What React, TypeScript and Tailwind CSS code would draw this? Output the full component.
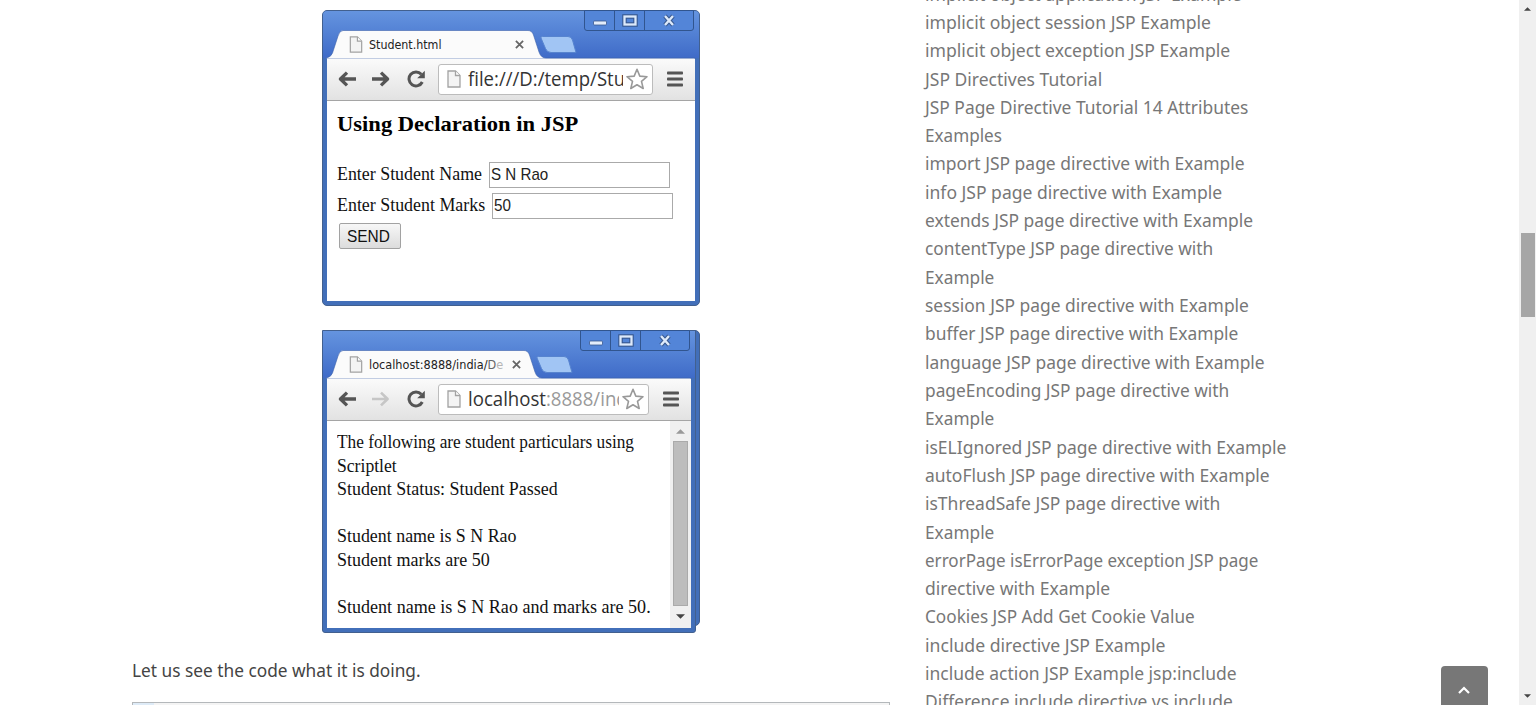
import { useLayoutEffect, useRef, useState, type ReactNode } from 'react';

/** A single line of text condensed or widened to an exact width. */
function FitText({ width, className = '', children }: { width: number; className?: string; children: ReactNode }) {
  const ref = useRef<HTMLSpanElement>(null);
  const [scale, setScale] = useState(1);
  useLayoutEffect(() => {
    if (ref.current) setScale(width / ref.current.offsetWidth);
  }, [width]);
  return (
    <span ref={ref} className={`inline-block origin-left whitespace-nowrap ${className}`} style={{ transform: `scaleX(${scale})` }}>
      {children}
    </span>
  );
}

function DocIcon({ className }: { className: string }) {
  return (
    <svg viewBox="0 0 14 18" className={className} fill="#f4f4f4" stroke="#a3a3a3" strokeWidth="1.3">
      <path d="M1 1H8.5L13 5.5V17H1Z" />
      <path d="M8.5 1V5.5H13" fill="#fff" />
    </svg>
  );
}

function BackIcon() {
  return (
    <svg viewBox="0 0 18 16" className="h-4 w-[18px] shrink-0" fill="none" stroke="#555" strokeWidth="3.3" strokeLinejoin="round">
      <path d="M9 1.6L2.4 8L9 14.4M3 8H18" />
    </svg>
  );
}

function ForwardIcon({ muted }: { muted: boolean }) {
  return (
    <svg viewBox="0 0 18 16" className="ml-4 h-4 w-[18px] shrink-0" fill="none" stroke={muted ? '#c6c6c6' : '#555'} strokeWidth={muted ? 2.6 : 3.3} strokeLinejoin="round">
      <path d="M9 1.6L15.6 8L9 14.4M15 8H0" />
    </svg>
  );
}

function ReloadIcon() {
  return (
    <svg viewBox="0 0 18 18" className="ml-[17px] h-[18px] w-[18px] shrink-0">
      <path d="M14.3 4.3A7 7 0 1 0 15.3 12" fill="none" stroke="#555" strokeWidth="3" />
      <path d="M17.8 0.8V8.2H10.2Z" fill="#555" />
    </svg>
  );
}

function StarIcon() {
  return (
    <svg viewBox="0 0 22 22" className="h-[22px] w-[22px] shrink-0" fill="#fff" stroke="#999" strokeWidth="1.6" strokeLinejoin="round">
      <path d="M11 1.3L13.8 8.1L21 8.7L15.5 13.4L17.2 20.5L11 16.7L4.8 20.5L6.5 13.4L1 8.7L8.2 8.1Z" />
    </svg>
  );
}

function WindowButtons() {
  return (
    <div className="absolute -top-px right-[5px] flex h-[21px] w-[110px] rounded-b-[3px] border border-[#31558f] bg-[#5385d8]">
      <div className="flex w-[30px] items-center justify-center border-r border-[#31558f]">
        <svg viewBox="0 0 14 6" className="mt-[5px] h-[6px] w-[14px]">
          <rect x="0.5" y="1" width="13" height="4" rx="1" fill="#e3edfb" stroke="#38588f" strokeWidth="0.8" />
        </svg>
      </div>
      <div className="flex w-[30px] items-center justify-center border-r border-[#31558f]">
        <svg viewBox="0 0 16 13" className="h-[13px] w-4" fill="none">
          <rect x="2.5" y="2.5" width="11" height="8" stroke="#38588f" strokeWidth="4.5" />
          <rect x="2.5" y="2.5" width="11" height="8" stroke="#dce9fa" strokeWidth="2.3" />
        </svg>
      </div>
      <div className="flex flex-1 items-center justify-center">
        <svg viewBox="0 0 14 13" className="h-[13px] w-[14px]" fill="none">
          <path d="M3 2L11 11M11 2L3 11" stroke="#38588f" strokeWidth="4.4" />
          <path d="M3 2L11 11M11 2L3 11" stroke="#dce9fa" strokeWidth="2.4" />
        </svg>
      </div>
    </div>
  );
}

interface WindowProps {
  narrow?: boolean;
  title: ReactNode;
  address: ReactNode;
  children: ReactNode;
}

function BrowserWindow({ narrow = false, title, address, children }: WindowProps) {
  const s = narrow ? 4 : 0;
  return (
    <div
      className={`relative flex flex-col bg-[#426fb9] ${
        narrow ? 'h-[303px] w-[374px] rounded-b-[3px]' : 'h-[296px] w-[378px] rounded-[5px]'
      } border border-[#42608f]`}
    >
      <div className={`relative h-[47px] shrink-0 bg-linear-to-b from-[#6594df] to-[#3f6bc8] ${narrow ? '' : 'rounded-t-[4px]'}`}>
        <svg
          className="absolute -top-px -left-px h-[49px] w-full"
          viewBox={narrow ? '0 0 372 49' : '0 0 376 49'}
          preserveAspectRatio="xMinYMin slice"
        >
          <path
            d={`M4.5 49V48Q9 47 10.5 43L16 26Q17.5 20.5 21 20.5H${206 - s}Q${210 - s} 20.5 ${211.5 - s} 25L${217 - s} 42Q${219 - s} 48 ${224 - s} 48H${373 - s}V49Z`}
            fill="#fbfbfb"
            stroke="#3d62ab"
            strokeWidth="0.6"
          />
          <path
            d={`M${220.5 - s} 26.5H${246 - s}Q${249.5 - s} 26.5 ${250.5 - s} 30L${254 - s} 42.5H${229 - s}Q${225 - s} 42.5 ${223.5 - s} 38.5L${219 - s} 28Q${218 - s} 26.5 ${220.5 - s} 26.5Z`}
            fill="#a1c5f4"
            stroke="#5784cf"
          />
        </svg>
        <WindowButtons />
        <div className={`relative flex h-[47px] items-center pt-5 pl-[26px] ${narrow ? 'w-[200px]' : 'w-[203px]'}`}>
          <DocIcon className="h-[17px] w-[14px] shrink-0" />
          <div className="ml-[6px] min-w-0 flex-1 overflow-hidden font-['DejaVu_Sans_Condensed','DejaVu_Sans',sans-serif] text-[12px] leading-5 text-[#222]">
            {title}
          </div>
          <svg viewBox="0 0 10 10" className="mr-[2px] ml-[7px] h-[9px] w-[9px] shrink-0" stroke="#666" strokeWidth="2">
            <path d="M1 1L9 9M9 1L1 9" />
          </svg>
        </div>
      </div>
      <div className="mr-[4px] ml-[4px] flex h-[43px] shrink-0 items-center border-b border-[#a5a5a5] bg-linear-to-b from-[#fbfbfb] to-[#e2e2e2] pr-3 pl-[11px]">
        <BackIcon />
        <ForwardIcon muted={narrow} />
        <ReloadIcon />
        <div className="ml-[13px] flex h-[31px] min-w-0 flex-1 items-center rounded-[3px] border border-[#bcbcbc] bg-white pr-[4px] pl-2">
          <DocIcon className="h-[18px] w-[14px] shrink-0" />
          <div className="mr-[3px] ml-[7px] min-w-0 flex-1 overflow-hidden font-['Open_Sans',sans-serif] text-[20px] leading-7 text-[#333]">
            {address}
          </div>
          <StarIcon />
        </div>
        <svg viewBox="0 0 16 16" className="ml-[14px] h-4 w-4 shrink-0" fill="#555">
          <rect y="0.5" width="16" height="3" rx="0.8" />
          <rect y="6.5" width="16" height="3" rx="0.8" />
          <rect y="12.5" width="16" height="3" rx="0.8" />
        </svg>
      </div>
      <div className="mr-[4px] mb-[4px] ml-[4px] flex min-h-0 flex-1 bg-white font-['Liberation_Serif',serif] text-[18.5px] text-[#111]">
        {children}
      </div>
    </div>
  );
}

function FormRow({ label, width, value, valueWidth }: { label: string; width: number; value: string; valueWidth: number }) {
  return (
    <div className="flex h-[31px] items-center">
      <div className={width === 145 ? 'w-[152px]' : 'w-[155px]'}>
        <FitText width={width}>{label}</FitText>
      </div>
      <div className="h-[26px] w-[181px] border border-[#aaa] pl-px font-['Liberation_Sans',sans-serif] text-[17px] leading-6 text-[#222]">
        <FitText width={valueWidth}>{value}</FitText>
      </div>
    </div>
  );
}

const results: [string, number][] = [
  ['The following are student particulars using', 297],
  ['Scriptlet', 60],
  ['Student Status: Student Passed', 221],
  ['', 0],
  ['Student name is S N Rao', 180],
  ['Student marks are 50', 153],
  ['', 0],
  ['Student name is S N Rao and marks are 50.', 314],
];

const links: [string, number][] = [
  ['implicit object application JSP Example', 317],
  ['implicit object session JSP Example', 286],
  ['implicit object exception JSP Example', 305],
  ['JSP Directives Tutorial', 177],
  ['JSP Page Directive Tutorial 14 Attributes', 323],
  ['Examples', 77],
  ['import JSP page directive with Example', 320],
  ['info JSP page directive with Example', 297],
  ['extends JSP page directive with Example', 328],
  ['contentType JSP page directive with', 288],
  ['Example', 69],
  ['session JSP page directive with Example', 324],
  ['buffer JSP page directive with Example', 313],
  ['language JSP page directive with Example', 340],
  ['pageEncoding JSP page directive with', 304],
  ['Example', 69],
  ['isELIgnored JSP page directive with Example', 361],
  ['autoFlush JSP page directive with Example', 345],
  ['isThreadSafe JSP page directive with', 295],
  ['Example', 69],
  ['errorPage isErrorPage exception JSP page', 333],
  ['directive with Example', 185],
  ['Cookies JSP Add Get Cookie Value', 270],
  ['include directive JSP Example', 240],
  ['include action JSP Example jsp:include', 312],
  ['Difference include directive vs include', 308],
];

export default function App() {
  return (
    <div className="relative flex h-[705px] w-full overflow-hidden bg-white font-['Noto_Sans','Open_Sans',sans-serif]">
      <main className="ml-[132px] flex w-[758px] shrink-0 flex-col pt-[10px]">
        <div className="ml-[190px]">
          <BrowserWindow
            title={<FitText width={73}>Student.html</FitText>}
            address={<FitText width={168}>file:///D:/temp/Stud</FitText>}
          >
            <div className="flex flex-1 flex-col pl-[10px]">
              <h3 className="mt-[9px] mb-[21px] h-7 text-[22px] leading-7 font-bold text-black">
                <FitText width={241}>Using Declaration in JSP</FitText>
              </h3>
              <FormRow label="Enter Student Name" width={145} value="S N Rao" valueWidth={57} />
              <FormRow label="Enter Student Marks" width={148} value="50" valueWidth={17} />
              <button className="mt-[2px] ml-[2px] h-[26px] w-[62px] rounded-[2px] border border-[#a2a2a2] bg-linear-to-b from-[#f7f7f7] to-[#dcdcdc] font-['Liberation_Sans',sans-serif] text-[16.5px] leading-6">
                <FitText width={43} className="origin-center">SEND</FitText>
              </button>
            </div>
          </BrowserWindow>
        </div>
        <div className="relative mt-6 ml-[190px]">
          <div className="absolute top-0 left-1 h-[296px] w-[374px] rounded-[5px] border border-[#42608f] bg-[#426fb9]" />
          <BrowserWindow
            narrow
            title={
              <FitText width={134}>
                localhost:8888/india/<span className="text-[#666]">D</span>
                <span className="text-[#b5b5b5]">e</span>
              </FitText>
            }
            address={
              <FitText width={160}>
                localhost<span className="text-[#999]">:8888/ind</span>
              </FitText>
            }
          >
            <div className="flex-1 overflow-hidden pt-[10px] pl-[10px]">
              {results.map(([text, width], i) => (
                <div key={i} className="h-[23.6px] leading-[23.6px]">
                  {text && <FitText width={width}>{text}</FitText>}
                </div>
              ))}
            </div>
            <div className="flex w-[21px] shrink-0 flex-col items-center bg-[#f0f0f0] pt-2 pb-[9px]">
              <svg viewBox="0 0 10 5" className="h-[5px] w-[9px]" fill="#999">
                <path d="M5 0L10 5H0Z" />
              </svg>
              <div className="mt-[7px] mb-2 w-[15px] flex-1 border border-[#aaa] bg-[#bdbdbd]" />
              <svg viewBox="0 0 10 5" className="h-[5px] w-[9px]" fill="#444">
                <path d="M0 0H10L5 5Z" />
              </svg>
            </div>
          </BrowserWindow>
        </div>
        <p className="mt-[23px] h-[28px] text-[18px] leading-[28px] text-[#444]">
          <FitText width={289}>Let us see the code what it is doing.</FitText>
        </p>
        <div className="mt-[18px] h-10 shrink-0 border border-[#b4b8bb] bg-[#f4f4f4]">
          <div className="h-full w-[21px] bg-[#deebf7]" />
        </div>
      </main>
      <aside className="-mt-[20.4px] ml-[35px] flex-1 text-[18px] text-[#777]">
        <ul>
          {links.map(([text, width], i) => (
            <li key={i} className="h-[28.32px] leading-[28.32px]">
              <FitText width={width}>{text}</FitText>
            </li>
          ))}
        </ul>
      </aside>
      <button className="absolute top-[666px] left-[1441px] flex h-[47px] w-[47px] items-center justify-center rounded-[4px] bg-[#777]">
        <svg viewBox="0 0 12 8" className="mr-px h-2 w-3" fill="none" stroke="#fff" strokeWidth="2.2">
          <path d="M1 7L6 2L11 7" />
        </svg>
      </button>
      <div className="flex h-full w-[17px] shrink-0 flex-col items-center bg-[#f0f0f0] pt-[7px] pb-[7px]">
        <svg viewBox="0 0 8 4" className="h-1 w-[7px]" fill="#444">
          <path d="M4 0L8 4H0Z" />
        </svg>
        <div className="mt-[222px] h-[84px] w-[14px] bg-[#a6a6a6]" />
        <svg viewBox="0 0 8 4" className="mt-auto h-1 w-[7px]" fill="#444">
          <path d="M0 0H8L4 4Z" />
        </svg>
      </div>
    </div>
  );
}
